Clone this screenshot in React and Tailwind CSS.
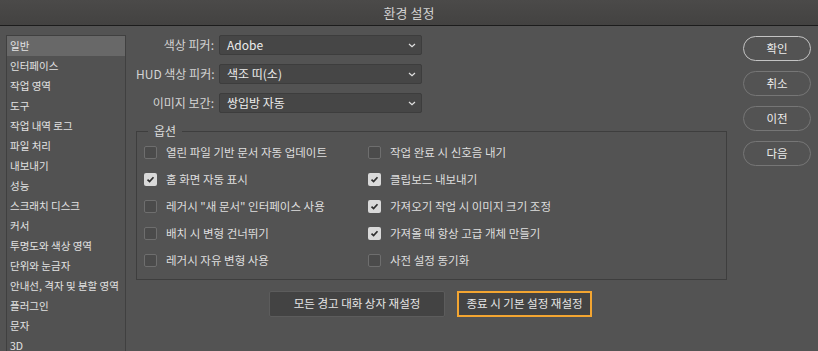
import React from 'react';

const sideItems = [
  '일반', '인터페이스', '작업 영역', '도구', '작업 내역 로그', '파일 처리', '내보내기', '성능',
  '스크래치 디스크', '커서', '투명도와 색상 영역', '단위와 눈금자', '안내선, 격자 및 분할 영역',
  '플러그인', '문자', '3D',
];

const selects = [
  { label: '색상 피커:', value: 'Adobe' },
  { label: 'HUD 색상 피커:', value: '색조 띠(소)' },
  { label: '이미지 보간:', value: '쌍입방 자동' },
];

const options = [
  ['열린 파일 기반 문서 자동 업데이트', false],
  ['작업 완료 시 신호음 내기', false],
  ['홈 화면 자동 표시', true],
  ['클립보드 내보내기', true],
  ['레거시 "새 문서" 인터페이스 사용', false],
  ['가져오기 작업 시 이미지 크기 조정', true],
  ['배치 시 변형 건너뛰기', false],
  ['가져올 때 항상 고급 개체 만들기', true],
  ['레거시 자유 변형 사용', false],
  ['사전 설정 동기화', false],
];

const Checkbox = ({ checked }) => (
  checked ? (
    <span className="w-[13px] h-[13px] rounded-[2px] bg-[#d9d9d9] flex items-center justify-center shrink-0">
      <svg width="9" height="9" viewBox="0 0 9 9">
        <path d="M1.5 4.6 L3.6 6.6 L7.5 2.3" fill="none" stroke="#2e2e2e" strokeWidth="1.7" />
      </svg>
    </span>
  ) : (
    <span className="w-[13px] h-[13px] rounded-[2px] bg-[#4b4b4b] border border-[#6e6e6e] shrink-0" />
  )
);

const Chevron = () => (
  <svg width="8" height="5" viewBox="0 0 8 5">
    <path d="M1 1 L4 3.8 L7 1" fill="none" stroke="#e0e0e0" strokeWidth="1.2" />
  </svg>
);

export default function App() {
  return (
    <div className="w-[818px] h-[351px] overflow-hidden bg-[#535353] flex flex-col" style={{ fontFamily: '"Noto Sans CJK KR", "Noto Sans", sans-serif' }}>
      {/* Title bar */}
      <div className="h-[26px] shrink-0 bg-gradient-to-b from-[#4b4a49] to-[#434241] border-b border-[#1c1c1c] flex items-center justify-center">
        <span className="text-[13px] text-[#d2d2d2] leading-none">환경 설정</span>
      </div>

      <div className="flex flex-1 pt-[9px]">
        {/* Sidebar */}
        <div className="ml-[6px] w-[120px] h-[330px] border border-[#404040] bg-[#525252] flex flex-col">
          {sideItems.map((item, i) => (
            <div key={i} className={`h-[20px] shrink-0 pl-[3px] flex items-center text-[10.5px] text-[#e2e2e2] whitespace-nowrap ${i === 0 ? 'bg-[#686868]' : ''}`}>
              {item}
            </div>
          ))}
        </div>

        {/* Main */}
        <div className="ml-[10px] w-[591px] flex flex-col">
          <div className="flex flex-col gap-[9px]">
            {selects.map((s, i) => (
              <div key={i} className="flex items-center h-[20px]">
                <div className="w-[83px] pr-[5px] text-right text-[12px] text-[#d4d4d4] whitespace-nowrap">{s.label}</div>
                <div className="w-[203px] h-[20px] bg-[#464646] border border-[#3d3d3d] rounded-[2px] flex items-center justify-between pl-[7px] pr-[5px]">
                  <span className="text-[12px] text-[#ececec]">{s.value}</span>
                  <Chevron />
                </div>
              </div>
            ))}
          </div>

          <fieldset className="mt-[10px] border border-[#3e3e3e] h-[157px] pl-[7px]">
            <legend className="ml-[4px] px-[6px] text-[12px] text-[#dcdcdc] leading-[16px]">옵션</legend>
            <div className="grid grid-cols-[224px_1fr]">
              {options.map(([text, checked], i) => (
                <div key={i} className="h-[27px] flex items-center gap-[9px]">
                  <Checkbox checked={checked} />
                  <span className="text-[11.5px] text-[#dedede] whitespace-nowrap">{text}</span>
                </div>
              ))}
            </div>
          </fieldset>

          <div className="mt-[11px] flex justify-center gap-[12px] pr-[2px]">
            <div className="w-[176px] h-[26px] bg-[#434343] border border-[#5c5c5c] rounded-[2px] flex items-center justify-center text-[11.5px] text-[#e6e6e6]">
              모든 경고 대화 상자 재설정
            </div>
            <div className="w-[135px] h-[26px] bg-[#434343] border-2 border-[#f3a531] flex items-center justify-center text-[11.5px] text-[#e6e6e6]">
              종료 시 기본 설정 재설정
            </div>
          </div>
        </div>

        {/* Right buttons */}
        <div className="ml-[16px] mt-[1px] w-[68px] flex flex-col gap-[10px]">
          {['확인', '취소', '이전', '다음'].map((b, i) => (
            <div key={i} className={`h-[25px] rounded-full border flex items-center justify-center text-[11.5px] text-[#ececec] ${i === 0 ? 'border-[#c4c4c4]' : 'border-[#767676]'}`}>
              {b}
            </div>
          ))}
        </div>
      </div>
    </div>
  );
}
